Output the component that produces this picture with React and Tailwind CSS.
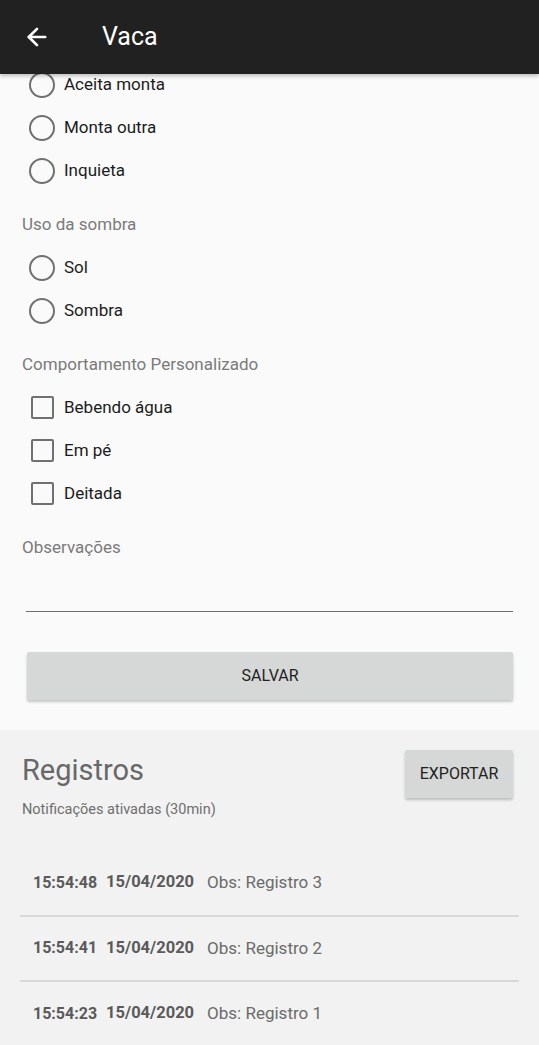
import { ArrowLeft } from 'lucide-react';

const font = { fontFamily: 'Roboto, "Noto Sans", sans-serif' };

function Radio({ label }) {
  return (
    <div className="flex h-[43px] items-center pl-[29px]">
      <span className="h-[26px] w-[26px] rounded-full border-2 border-[#707070]" />
      <span className="ml-[9px] text-[17px] text-[#1c1c1c]">{label}</span>
    </div>
  );
}

function Check({ label }) {
  return (
    <div className="flex h-[43px] items-center pl-[31px]">
      <span className="h-[23px] w-[23px] rounded-[2px] border-2 border-[#707070]" />
      <span className="ml-[10px] text-[17px] text-[#1c1c1c]">{label}</span>
    </div>
  );
}

function Label({ children }) {
  return <div className="pl-[22px] pt-[22px] pb-[12px] text-[17px] leading-[20px] text-[#7a7a7a]">{children}</div>;
}

const registros = [
  { hora: '15:54:48', data: '15/04/2020', obs: 'Registro 3' },
  { hora: '15:54:41', data: '15/04/2020', obs: 'Registro 2' },
  { hora: '15:54:23', data: '15/04/2020', obs: 'Registro 1' },
];

export default function App() {
  return (
    <div className="h-[1045px] w-[539px] overflow-hidden bg-[#f2f2f2]" style={font}>
      <div className="relative z-10 flex h-[74px] items-center bg-[#212121] shadow-[0_2px_4px_rgba(0,0,0,0.25)]">
        <ArrowLeft className="ml-[23px] text-white" size={28} strokeWidth={2.3} />
        <div className="ml-[51px] text-[25px] text-white">Vaca</div>
      </div>

      <div className="-mt-[11px] bg-[#fafafa] pb-[30px]">
        <Radio label="Aceita monta" />
        <Radio label="Monta outra" />
        <Radio label="Inquieta" />
        <Label>Uso da sombra</Label>
        <Radio label="Sol" />
        <Radio label="Sombra" />
        <Label>Comportamento Personalizado</Label>
        <Check label="Bebendo água" />
        <Check label="Em pé" />
        <Check label="Deitada" />
        <Label>Observações</Label>
        <div className="mx-[26px] h-[43px] border-b border-[#6e6e6e]" />
        <button className="mx-[27px] mt-[40px] flex h-[48px] w-[486px] items-center justify-center rounded-[2px] bg-[#d6d7d7] text-[16px] text-[#222] shadow-[0_2px_3px_rgba(0,0,0,0.22)]">
          SALVAR
        </button>
      </div>

      <div className="bg-[#f2f2f2] pt-[20px]">
        <div className="flex items-start justify-between pl-[22px] pr-[26px]">
          <div>
            <div className="pt-[4px] text-[29px] leading-[32px] text-[#686868]">Registros</div>
            <div className="mt-[15px] text-[14.5px] leading-[18px] text-[#6e6e6e]">Notificações ativadas (30min)</div>
          </div>
          <button className="flex h-[48px] w-[108px] items-center justify-center rounded-[2px] bg-[#d6d7d7] text-[16px] text-[#222] shadow-[0_2px_3px_rgba(0,0,0,0.22)]">
            EXPORTAR
          </button>
        </div>
        <div className="mt-[32px] mx-[20px]">
          {registros.map((r) => (
            <div key={r.hora} className="flex h-[65.5px] items-center border-b-2 border-[#d9d9d9] pl-[13px]">
              <span className="text-[16px] font-bold text-[#5a5a5a]">{r.hora}</span>
              <span className="ml-[9px] text-[16.5px] font-bold text-[#5a5a5a]">{r.data}</span>
              <span className="ml-[13px] text-[17px] text-[#6b6b6b]">Obs: {r.obs}</span>
            </div>
          ))}
        </div>
      </div>
    </div>
  );
}
